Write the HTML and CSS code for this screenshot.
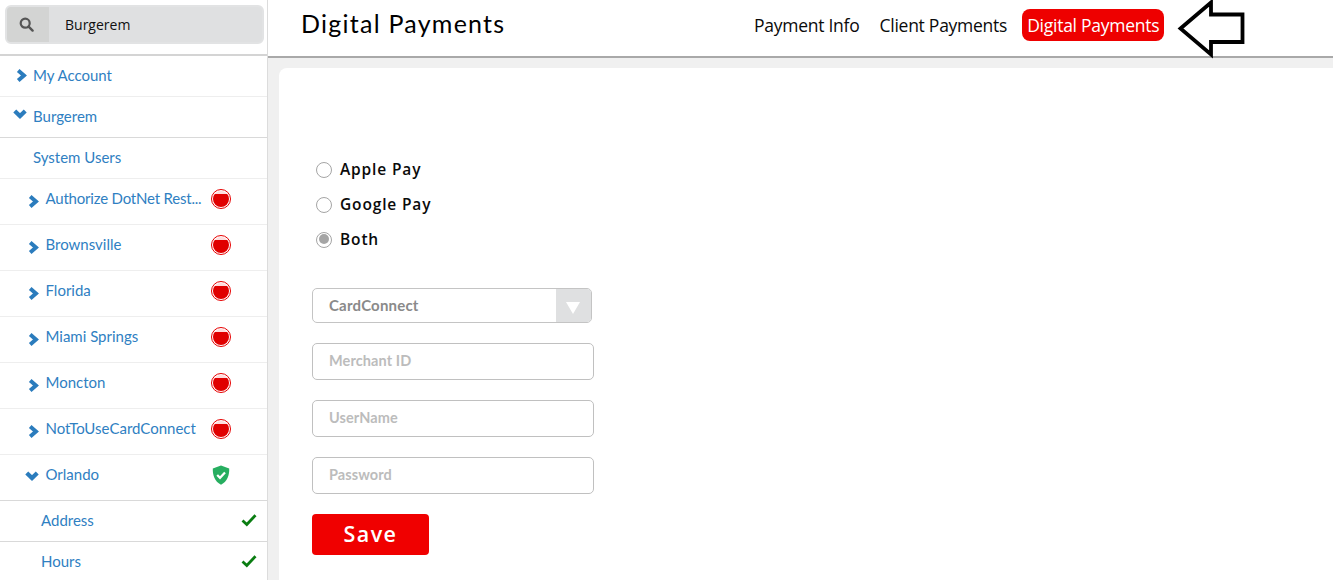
FILE: index.html
```html
<!DOCTYPE html>
<html lang="en">
<head>
<meta charset="utf-8">
<title>Digital Payments</title>
<link rel="stylesheet" href="styles.css">
</head>
<body>
<div class="app">
  <aside class="sidebar">
    <div class="search-wrap">
      <div class="search">
        <span class="search-btn">
          <svg width="15" height="15" viewBox="0 0 15 15"><circle cx="6.2" cy="6.2" r="4.5" fill="none" stroke="#555" stroke-width="2.2"/><path d="M9.6 9.6L13.6 13.6" stroke="#555" stroke-width="2.4" stroke-linecap="round"/></svg>
        </span>
        <span class="search-text">Burgerem</span>
      </div>
    </div>
    <nav class="menu">
      <div class="row row-top"><svg class="chev chev-top" viewBox="0 0 10 12"><path d="M2 1.5L7.2 6L2 10.5" /></svg><span>My Account</span></div>
      <div class="row row-top row-open"><svg class="chev chev-down-top" viewBox="0 0 12 10"><path d="M1.5 2.4L6 6.8L10.5 2.4" /></svg><span>Burgerem</span></div>
      <div class="row row-top row-plain"><span>System Users</span></div>
      <div class="row row-store"><svg class="chev" viewBox="0 0 10 12"><path d="M2 1.5L7.2 6L2 10.5" /></svg><span class="name name-long">Authorize DotNet Rest...</span><span class="stop"></span></div>
      <div class="row row-store"><svg class="chev" viewBox="0 0 10 12"><path d="M2 1.5L7.2 6L2 10.5" /></svg><span class="name">Brownsville</span><span class="stop"></span></div>
      <div class="row row-store"><svg class="chev" viewBox="0 0 10 12"><path d="M2 1.5L7.2 6L2 10.5" /></svg><span class="name">Florida</span><span class="stop"></span></div>
      <div class="row row-store"><svg class="chev" viewBox="0 0 10 12"><path d="M2 1.5L7.2 6L2 10.5" /></svg><span class="name">Miami Springs</span><span class="stop"></span></div>
      <div class="row row-store"><svg class="chev" viewBox="0 0 10 12"><path d="M2 1.5L7.2 6L2 10.5" /></svg><span class="name">Moncton</span><span class="stop"></span></div>
      <div class="row row-store"><svg class="chev" viewBox="0 0 10 12"><path d="M2 1.5L7.2 6L2 10.5" /></svg><span class="name">NotToUseCardConnect</span><span class="stop"></span></div>
      <div class="row row-store row-open"><svg class="chev chev-down" viewBox="0 0 12 10"><path d="M1.5 2.4L6 6.8L10.5 2.4" /></svg><span class="name">Orlando</span>
        <svg class="shield" viewBox="0 0 18 20"><path d="M9 0.5L17.2 3.4C17.4 10 15.6 16 9 19.8C2.4 16 0.6 10 0.8 3.4Z" fill="#27ae60"/><path d="M5.2 10L8 12.8L13 7.4" fill="none" stroke="#fff" stroke-width="2.2"/></svg>
      </div>
      <div class="row row-sub"><span class="name">Address</span><svg class="tick" viewBox="0 0 16 14"><path d="M1.5 7.5L5.8 11.5L14.5 2.2" /></svg></div>
      <div class="row row-sub"><span class="name">Hours</span><svg class="tick" viewBox="0 0 16 14"><path d="M1.5 7.5L5.8 11.5L14.5 2.2" /></svg></div>
    </nav>
  </aside>
  <main class="main">
    <header class="topbar">
      <h1 class="title">Digital Payments</h1>
      <div class="tabs">
        <a class="tab">Payment Info</a>
        <a class="tab">Client Payments</a>
        <a class="tab tab-active">Digital Payments</a>
      </div>
      <svg class="arrow" width="70" height="60" viewBox="0 0 70 60"><path d="M3.5 28.5L34 2.5V14.5H65.5V42H34V54.5Z" fill="#fff" stroke="#000" stroke-width="3.8"/></svg>
    </header>
    <div class="content">
      <section class="card">
        <div class="radios">
          <label class="radio"><span class="dot"></span>Apple Pay</label>
          <label class="radio"><span class="dot"></span>Google Pay</label>
          <label class="radio"><span class="dot dot-on"></span>Both</label>
        </div>
        <div class="select"><span class="select-text">CardConnect</span><span class="select-btn"><span class="tri"></span></span></div>
        <div class="field">Merchant ID</div>
        <div class="field">UserName</div>
        <div class="field">Password</div>
        <button class="save">Save</button>
      </section>
    </div>
  </main>
</div>
</body>
</html>
```
FILE: styles.css
```css
* { box-sizing: border-box; }
html, body { margin: 0; padding: 0; height: 580px; overflow: hidden; background: #fff; }
body { font-family: "Lato", "Open Sans", sans-serif; }
.app { display: flex; height: 580px; }

.sidebar { width: 268px; flex: none; border-right: 1px solid #dcdcdc; overflow: hidden; }
.search-wrap { height: 56px; padding: 5px 3px 0 5px; border-bottom: 2px solid #d4d4d4; }
.search { height: 39px; background: #dfe0e1; border-radius: 6px; border: 2px solid #e2e3e4; display: flex; align-items: stretch; }
.search-btn { width: 42px; background: #d3d4d3; display: flex; align-items: center; justify-content: center; border-radius: 4px 0 0 4px; padding-right: 4px; }
.search-text { margin-left: 16px; font-family: "Open Sans", sans-serif; font-size: 14px; line-height: 35px; color: #111; }

.menu { display: flex; flex-direction: column; }
.row { display: flex; align-items: center; color: #2f80c2; font-size: 15px; border-bottom: 1px solid #eee; position: relative; }
.row-top { height: 41px; padding-left: 33px; }
.row-top span, .row-sub .name { position: relative; top: -1px; }
.row-open { border-bottom-color: #d9d9d9; }
.row-plain { border-bottom-color: #eee; }
.row-store { height: 46px; padding-left: 45.5px; padding-right: 36px; }
.row-sub { height: 41px; padding-left: 41px; padding-right: 10px; border-bottom: 1px solid #d9d9d9; }
.row-store .name, .row-sub .name { flex: 1; }
.row-store .name { position: relative; top: -4px; }
.name-long { letter-spacing: -0.2px; }

.chev { position: absolute; left: 28px; top: 15px; width: 11px; height: 15px; }
.chev path { fill: none; stroke: #2b7cbd; stroke-width: 3.6; }
.chev-top { left: 16px; top: 12px; }
.chev-down-top { left: 13px; top: 11px; width: 14px; height: 12px; }
.chev-down { left: 25px; top: 15px; width: 14px; height: 12px; }
.stop { width: 20px; height: 20px; border-radius: 50%; background: #fff; border: 1px solid #e60000; position: relative; top: -3px; }
.stop::before { content: ""; position: absolute; inset: 1px; border-radius: 50%; background: linear-gradient(#ffdcdc 0 3px, #e00000 3px); }
.shield { width: 18px; height: 20px; margin-right: 1px; position: relative; top: -3px; }
.tick { width: 16px; height: 14px; position: relative; top: -1px; }
.tick path { fill: none; stroke: #0a7d12; stroke-width: 2.8; }

.main { flex: 1; min-width: 0; display: flex; flex-direction: column; }
.topbar { height: 58px; flex: none; border-bottom: 2px solid #a9a9a9; display: flex; align-items: flex-start; position: relative; padding-left: 33px; }
.title { margin: 6px 0 0; font-family: "Lato", sans-serif; font-weight: 400; font-size: 25px; line-height: 34px; letter-spacing: 1.25px; color: #000; }
.tabs { position: absolute; left: 481px; top: 9px; display: flex; align-items: center; gap: 10px; }
.tab { font-family: "Open Sans", sans-serif; font-size: 17.5px; line-height: 32px; height: 32px; padding: 0 5px; color: #0a0a0a; white-space: nowrap; letter-spacing: -0.26px; }
.tab-active { background: #ee0000; color: #fff; border-radius: 8px; }
.arrow { position: absolute; left: 909px; top: 0; }

.content { flex: 1; background: #f0f0f0; padding: 10px 0 0 11px; min-height: 0; }
.card { height: 100%; background: #fff; border-radius: 8px 0 0 0; padding: 83px 0 0 33px; }
.radios { display: flex; flex-direction: column; margin-bottom: 32px; margin-left: 4px; }
.radio { display: flex; align-items: center; height: 35px; font-family: "Open Sans", sans-serif; font-weight: 600; font-size: 15.5px; letter-spacing: .85px; color: #0a0a0a; }
.dot { width: 16px; height: 16px; border-radius: 50%; border: 1.5px solid #a5a5a5; margin-right: 8px; background: #fff; position: relative; top: 1px; }
.dot-on::after { content: ""; position: absolute; left: 1.5px; top: 1.5px; width: 10px; height: 10px; border-radius: 50%; background: #a5a5a5; }

.select { width: 280px; height: 35px; border: 1px solid #c4c4c4; border-radius: 5px; display: flex; overflow: hidden; justify-content: space-between; align-items: stretch; margin-bottom: 20px; }
.select-text { padding-left: 16px; font-size: 15px; letter-spacing: .2px; font-weight: 700; line-height: 32px; color: #8a8a8a; font-family: "Lato", sans-serif; }
.select-btn { width: 35px; background: #dfe0e1; display: flex; align-items: center; justify-content: center; }
.tri { width: 0; height: 0; border-left: 7px solid transparent; border-right: 7px solid transparent; border-top: 12px solid #fff; margin-top: 4px; margin-right: 2px; }
.field { width: 282px; height: 37px; border: 1px solid #c0c0c0; border-radius: 5px; padding-left: 16px; font-size: 14.5px; letter-spacing: .1px; font-weight: 700; line-height: 34px; color: #bcbcbc; margin-bottom: 20px; }
.save { display: block; width: 117px; height: 41px; background: #f00000; color: #fff; border: 0; border-radius: 4px; font-family: "Open Sans", sans-serif; font-weight: 600; font-size: 21.5px; letter-spacing: 1.4px; padding: 0 0 2px; }
```
